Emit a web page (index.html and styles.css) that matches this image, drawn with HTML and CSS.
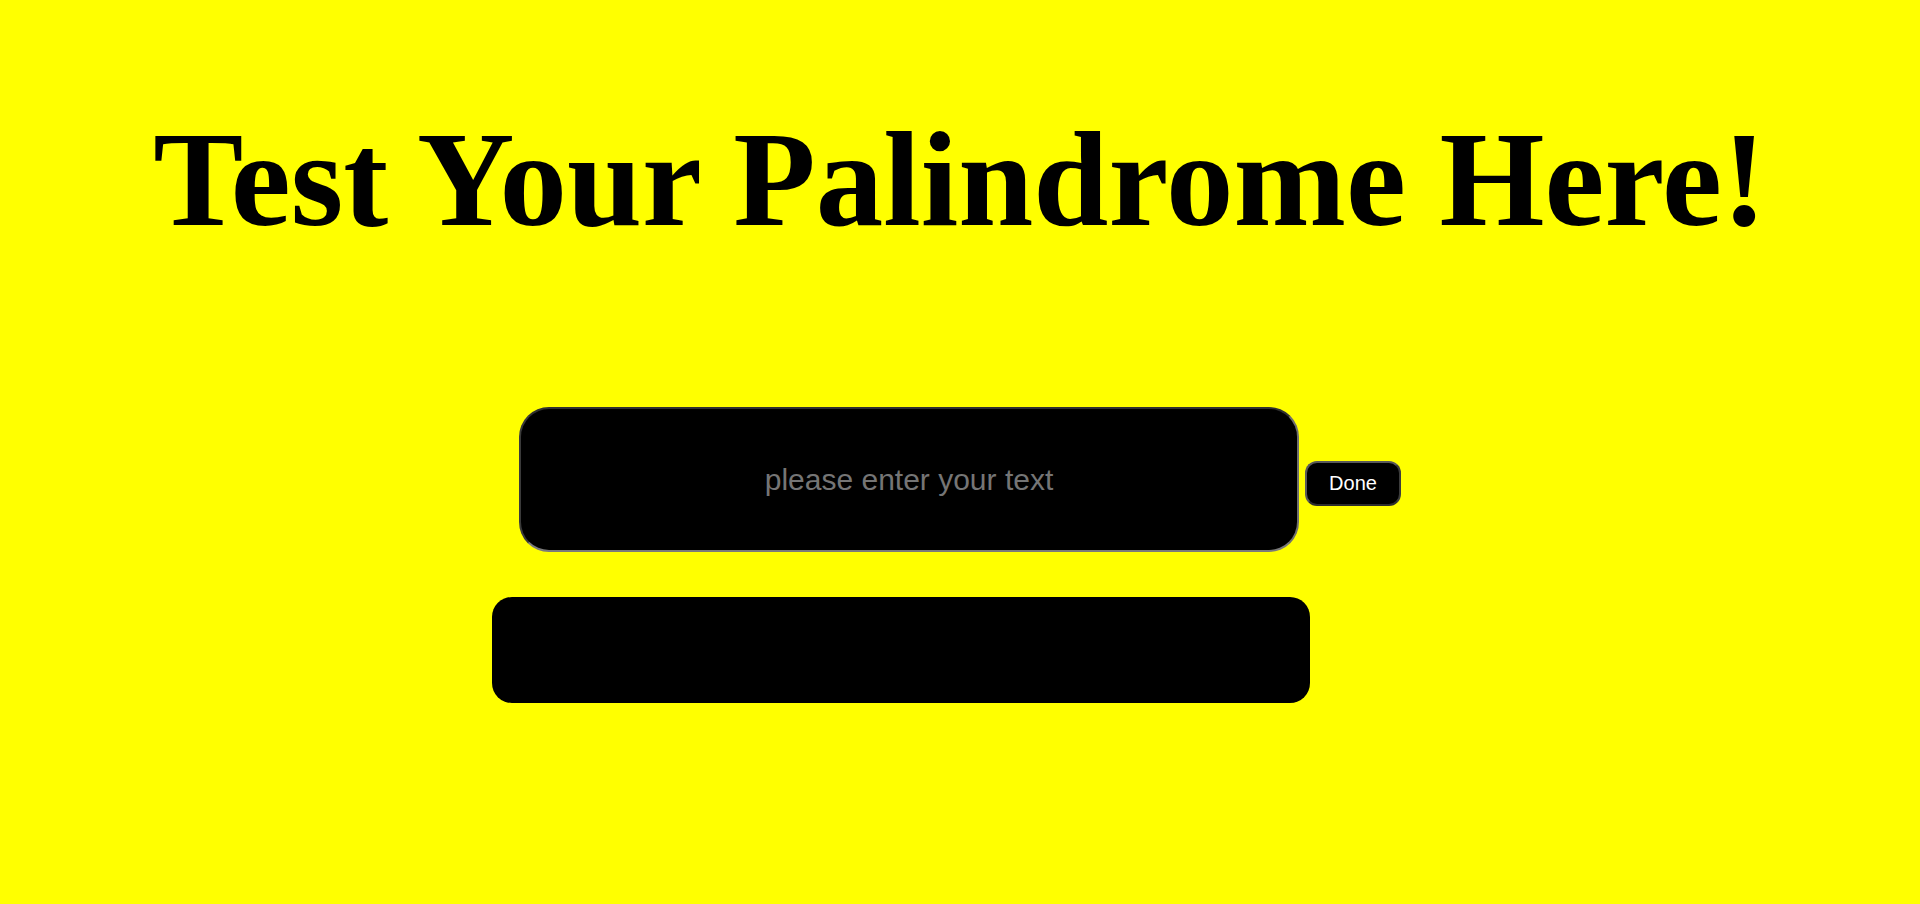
FILE: index.html
```html
<!DOCTYPE html>
<html lang="en">
<head>
<meta charset="utf-8">
<title>Palindrome Checker</title>
<link rel="stylesheet" href="styles.css">
</head>
<body>
<main class="page">
  <h1 class="title">Test Your Palindrome Here!</h1>
  <div class="entry-row">
    <input class="text-input" type="text" placeholder="please enter your text">
    <button class="done-btn" type="button">Done</button>
  </div>
  <div class="result"></div>
</main>
</body>
</html>
```
FILE: styles.css
```css
html, body {
  margin: 0;
  padding: 0;
  background: #ffff00;
}
body {
  height: 904px;
  overflow: hidden;
}
.page {
  display: flex;
  flex-direction: column;
}
.title {
  margin: 112px 0 0 0;
  height: 137px;
  font-family: "Liberation Serif", "Times New Roman", serif;
  font-weight: bold;
  font-size: 135px;
  line-height: 135px;
  text-align: center;
  color: #000;
}
.entry-row {
  display: flex;
  justify-content: center;
  align-items: baseline;
  gap: 6px;
  margin-top: 158px;
}
.text-input {
  box-sizing: border-box;
  width: 780px;
  height: 145px;
  margin: 0;
  padding: 0 10px;
  border: 2px solid;
  border-color: #303030 #6e6e6e #7a7a7a #3a3a3a;
  border-radius: 30px;
  background: #000;
  color: #fff;
  font-family: "Liberation Sans", Arial, sans-serif;
  font-size: 30px;
  text-align: center;
  outline: none;
}
.text-input::placeholder {
  color: #757575;
}
.done-btn {
  box-sizing: border-box;
  width: 96px;
  height: 45px;
  margin: 0;
  padding: 0;
  border: 2px solid;
  border-color: #5a5a5a #3c3c3c #2e2e2e #5a5a5a;
  border-radius: 12px;
  background: #000;
  color: #fff;
  font-family: "Liberation Sans", Arial, sans-serif;
  font-size: 20px;
}
.result {
  width: 818px;
  height: 106px;
  margin: 45px 0 0 492px;
  border-radius: 20px;
  background: #000;
}
```
